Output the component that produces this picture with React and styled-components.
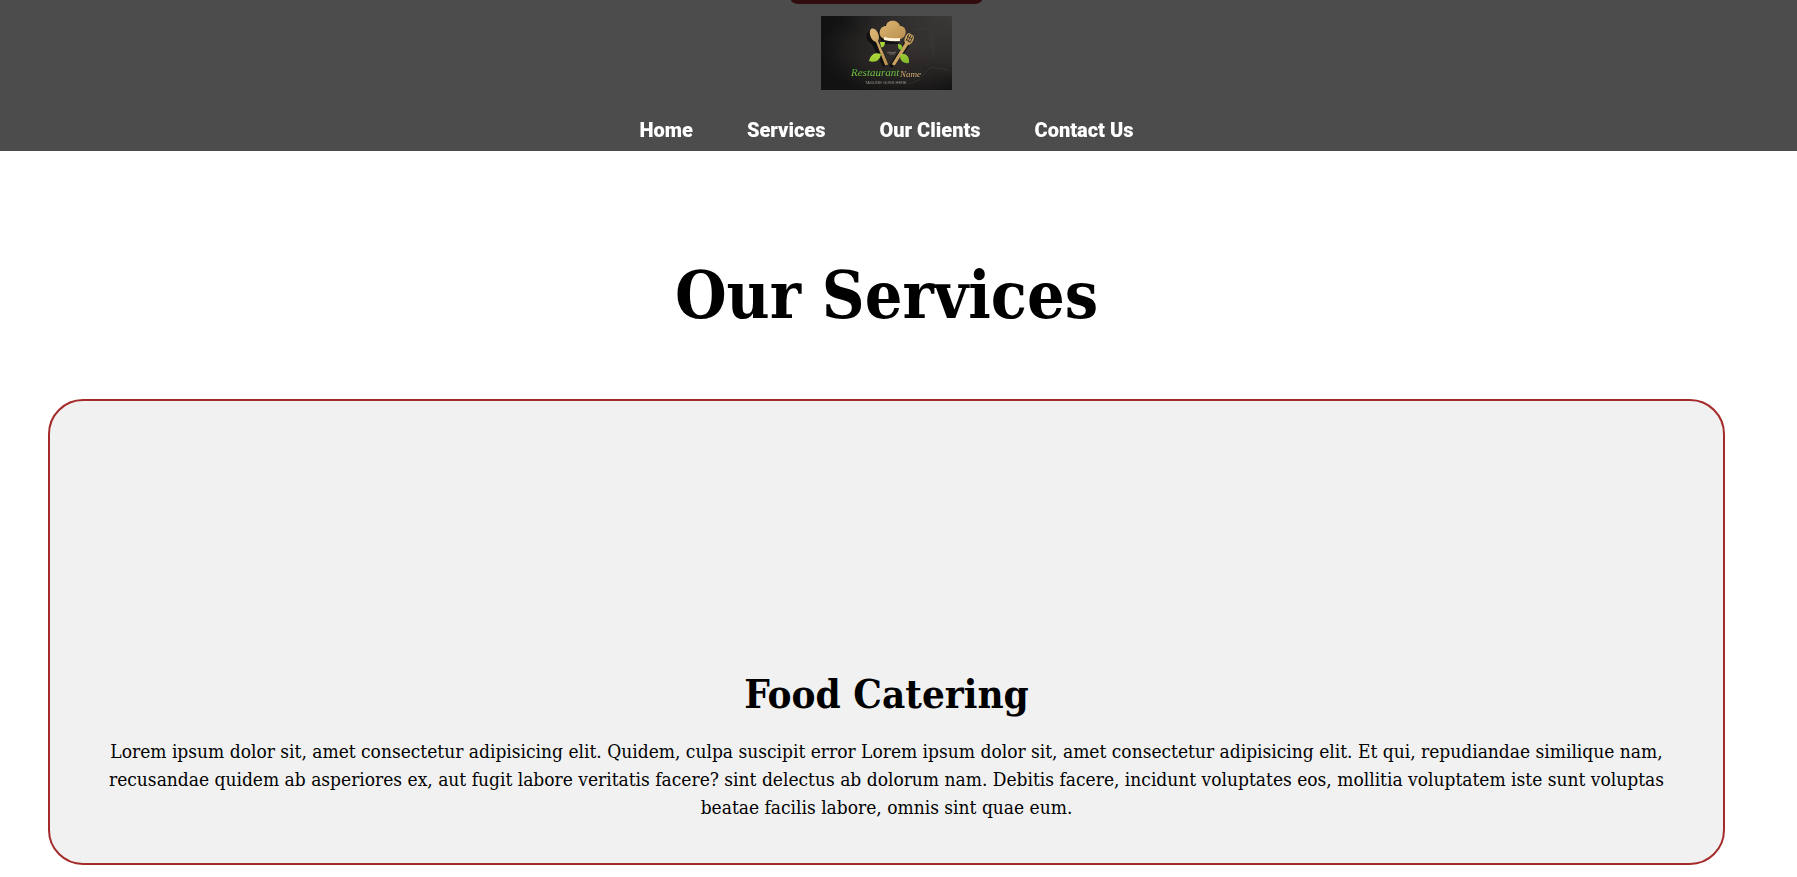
import React from "react";
import styled, { createGlobalStyle } from "styled-components";

const serif = '"DejaVu Serif Condensed", "DejaVu Serif", serif';

const GlobalStyle = createGlobalStyle`
  *, *::before, *::after { box-sizing: border-box; }
  body { margin: 0; background: #fff; color: #000; font-family: ${serif}; }
  h1, h2, p, ul { margin: 0; padding: 0; }
`;

const Header = styled.header`
  position: fixed;
  inset: 0 0 auto 0;
  z-index: 1;
  display: flex;
  flex-direction: column;
  align-items: center;
  gap: 24px;
  padding: 16px 24px 5px 0;
  background: rgba(0, 0, 0, 0.7);
`;

const LogoLink = styled.a`
  display: block;
  height: 74px;
`;

const LogoArt = styled.svg`
  display: block;
  width: 131px;
  height: 74px;
`;

const NavList = styled.ul`
  display: flex;
  gap: 54px;
  list-style: none;
`;

const NavLink = styled.a`
  display: block;
  color: #fff;
  font: 900 20px/32px Roboto, sans-serif;
  white-space: nowrap;
  text-decoration: none;
`;

const Page = styled.main`
  display: flex;
  flex-direction: column;
  padding: 0 72px 12px 48px;
`;

const HeroEdge = styled.div`
  align-self: center;
  width: 191px;
  height: 4px;
  border-radius: 0 0 8px 8px / 0 0 4px 4px;
  background: brown;
`;

const Title = styled.h1`
  padding: 251px 0 64px;
  font-size: 66px;
  line-height: 80px;
  text-align: center;
`;

const Card = styled.article`
  padding: 267px 38px 42px;
  border: 2px solid brown;
  border-radius: 35px;
  background: #f1f1f1;
  text-align: center;
`;

const CardTitle = styled.h2`
  font-size: 40px;
  line-height: 52px;
`;

const CardText = styled.p`
  margin-top: 17px;
  font-size: 19px;
  line-height: 28px;
`;

const links = [
  ["Home", "#home"],
  ["Services", "#services"],
  ["Our Clients", "#clients"],
  ["Contact Us", "#contact"],
];

function Logo() {
  return (
    <LogoArt viewBox="0 0 131 74" role="img" aria-label="Restaurant Name">
      <defs>
        <radialGradient id="wall" cx="65%" cy="45%" r="65%">
          <stop offset="0" stopColor="#34302e" />
          <stop offset="0.6" stopColor="#242221" />
          <stop offset="1" stopColor="#121212" />
        </radialGradient>
        <linearGradient id="corner" x1="0" y1="1" x2="1" y2="0">
          <stop offset="0.55" stopColor="#454342" stopOpacity="0" />
          <stop offset="1" stopColor="#454342" stopOpacity="0.8" />
        </linearGradient>
        <linearGradient id="gold" x1="0" y1="0" x2="1" y2="1">
          <stop offset="0" stopColor="#dcb775" />
          <stop offset="1" stopColor="#b98f4c" />
        </linearGradient>
        <linearGradient id="leaf" x1="0" y1="0" x2="1" y2="1">
          <stop offset="0" stopColor="#b5dc3c" />
          <stop offset="1" stopColor="#7fb82c" />
        </linearGradient>
        <linearGradient id="name" x1="0" y1="0" x2="0" y2="1">
          <stop offset="0" stopColor="#2f9a2c" />
          <stop offset="1" stopColor="#8fd548" />
        </linearGradient>
      </defs>
      <rect width="131" height="74" fill="url(#wall)" />
      <rect width="131" height="74" fill="url(#corner)" />
      <path d="M95 13h13l3 19M101 60l9-9 17 3M112 12v28M88 68l12-5" fill="none" stroke="#4a4644" strokeWidth="0.6" opacity="0.6" />
      <g fill="#090909" opacity="0.75" transform="translate(-2 2)">
        <path d="M62 21C56 17 59 10 65 10c1-6 11-7 13 0 7-1 9 8 2 11l-1 5H63z" />
        <path d="M49 14c5-4 10 4 9 10l9 24-3 1-11-23c-5-2-7-8-4-12z" />
        <path d="M86 18l7 3-4 9-16 20-3-2 14-21z" />
      </g>
      <path d="M63 23C56 20 58 10 65 10c1-7 12-7 14 0 7 0 8 10 1 13z" fill="url(#gold)" />
      <path d="M63 21q8 2 16 1v3q-8 1-16-1z" fill="#fff4dc" />
      <path d="M50 13c4-2 8 4 8 8 0 2-1 3-1 4l10 23q-1 2-3 1L55 26c-5-1-8-10-5-13z" fill="url(#gold)" />
      <path d="M88 17l5 3c0 5-3 9-6 9L74 49q-2 1-3-1l13-21c-2-3 1-9 4-10z" fill="url(#gold)" />
      <path d="M88 18l-3 7M90 19l-3 7M92 20l-3 7M86 20l5 3M85 23l4 3" stroke="#2b2520" strokeWidth="0.8" />
      <path d="M48 45c2-7 6-9 12-7-1 7-6 9-12 7zM88 47c1-7-4-10-8-9-3 6 3 10 8 9z" fill="url(#leaf)" />
      <path d="M59 26l5 0c0 4-2 6-4 5zM77 28c4 0 5 3 4 6-4 0-4-3-4-6z" fill="url(#leaf)" />
      <path d="M66 37l3-1 3 1 3-1M68 38h6" fill="none" stroke="#8b8782" strokeWidth="0.7" />
      <g fontFamily="Liberation Serif, serif" fontStyle="italic">
        <text x="30" y="60" fontSize="11" fill="url(#name)">Restaurant</text>
        <text x="79" y="61" fontSize="9" fill="#d5ac75">Name</text>
      </g>
      <text x="44" y="68" fontSize="4" fontFamily="Liberation Sans, sans-serif" fill="#96918d">TAGLINE GOES HERE</text>
    </LogoArt>
  );
}

export default function App() {
  return (
    <>
      <GlobalStyle />
      <Header>
        <LogoLink href="#home"><Logo /></LogoLink>
        <nav>
          <NavList>
            {links.map(([label, href]) => (
              <li key={href}><NavLink href={href}>{label}</NavLink></li>
            ))}
          </NavList>
        </nav>
      </Header>
      <Page>
        <HeroEdge />
        <Title>Our Services</Title>
        <Card>
          <CardTitle>Food Catering</CardTitle>
          <CardText>
            Lorem ipsum dolor sit, amet consectetur adipisicing elit. Quidem, culpa suscipit error Lorem ipsum dolor
            sit, amet consectetur adipisicing elit. Et qui, repudiandae similique nam, recusandae quidem ab asperiores
            ex, aut fugit labore veritatis facere? sint delectus ab dolorum nam. Debitis facere, incidunt voluptates
            eos, mollitia voluptatem iste sunt voluptas beatae facilis labore, omnis sint quae eum.
          </CardText>
        </Card>
      </Page>
    </>
  );
}
